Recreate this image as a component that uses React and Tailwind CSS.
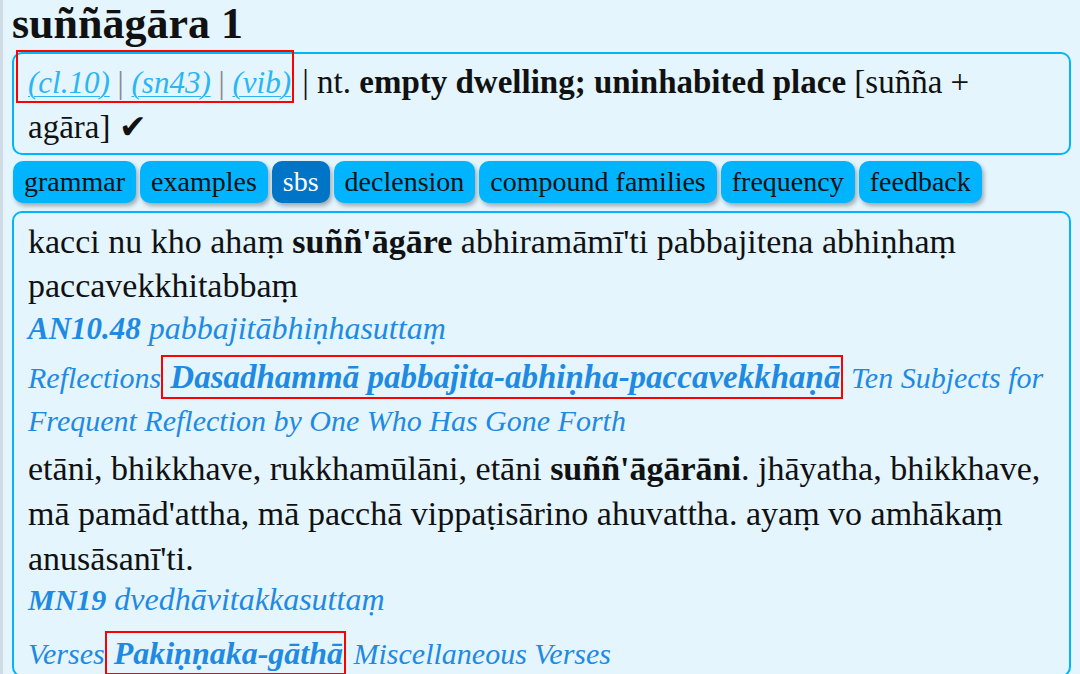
import React from "react";

const serif = { fontFamily: '"Liberation Serif", "Times New Roman", serif' };

function Tab({ label, active }) {
  return (
    <div
      className={
        "h-[42px] px-[11px] rounded-[10px] flex items-center text-[28px] shadow-[2px_3px_4px_rgba(0,0,0,0.3)] " +
        (active ? "bg-[#0074c7] text-white" : "bg-[#00b4ff] text-[#111]")
      }
    >
      {label}
    </div>
  );
}

export default function App() {
  const tabs = [
    "grammar",
    "examples",
    "sbs",
    "declension",
    "compound families",
    "frequency",
    "feedback",
  ];
  return (
    <div
      className="min-h-[674px] h-[674px] overflow-hidden bg-[#e4f5fe] border-l-[3px] border-[#cfdce5] pl-[9px] pr-[9px] text-[#111]"
      style={serif}
    >
      <div className="text-[44px] font-bold leading-[48px] h-[52px]">suññāgāra 1</div>

      <div className="border-2 border-[#00b4ff] rounded-[10px] px-[14px] pt-[6px] pb-[4px] text-[33px] leading-[44px]">
        <span className="border-2 border-[#ff0000] ml-[-12px] pl-[10px] pr-[1px] pt-[13px] pb-[1px] text-[31px]">
          <a className="italic text-[#2bb5f5] underline underline-offset-[3px] decoration-1">(cl.10)</a>
          <span className="text-[#888]"> | </span>
          <a className="italic text-[#2bb5f5] underline underline-offset-[3px] decoration-1">(sn43)</a>
          <span className="text-[#888]"> | </span>
          <a className="italic text-[#2bb5f5] underline underline-offset-[3px] decoration-1">(vib)</a>
        </span>{" "}
        | nt. <b>empty dwelling; uninhabited place</b> [suñña + agāra] ✔
      </div>

      <div className="flex gap-[4px] mt-[6px] ml-[1px]">
        {tabs.map((t) => (
          <Tab key={t} label={t} active={t === "sbs"} />
        ))}
      </div>

      <div className="mt-[8px] border-2 border-[#00b4ff] rounded-[10px] px-[14px] pt-[7px] text-[34px]">
        <p className="leading-[44px]">
          kacci nu kho ahaṃ <b>suññ'āgāre</b> abhiramāmī'ti pabbajitena abhiṇhaṃ paccavekkhitabbaṃ
        </p>
        <p className="leading-[40px] italic text-[#1f8ae2] text-[32px]">
          <b className="text-[31px]">AN10.48</b> pabbajitābhiṇhasuttaṃ
        </p>
        <p className="leading-[43px] italic text-[#1f8ae2] mt-[7px] text-[30px]">
          Reflections
          <span className="border-2 border-[#ff0000] pl-[7px] pr-[1px] py-[2px] font-bold text-[33px]">
            Dasadhammā pabbajita-abhiṇha-paccavekkhaṇā
          </span>{" "}
          Ten Subjects for Frequent Reflection by One Who Has Gone Forth
        </p>
        <p className="leading-[45px] mt-[4px]">
          etāni, bhikkhave, rukkhamūlāni, etāni <b>suññ'āgārāni</b>. jhāyatha, bhikkhave, mā
          pamād'attha, mā pacchā vippaṭisārino ahuvattha. ayaṃ vo amhākaṃ anusāsanī'ti.
        </p>
        <p className="leading-[36px] italic text-[#1f8ae2] text-[32px]">
          <b className="text-[30px]">MN19</b> dvedhāvitakkasuttaṃ
        </p>
        <p className="leading-[43px] italic text-[#1f8ae2] mt-[14px] text-[30px]">
          Verses
          <span className="border-2 border-[#ff0000] pl-[7px] pr-[1px] py-[2px] font-bold text-[32px]">
            Pakiṇṇaka-gāthā
          </span>{" "}
          Miscellaneous Verses
        </p>
      </div>
    </div>
  );
}
